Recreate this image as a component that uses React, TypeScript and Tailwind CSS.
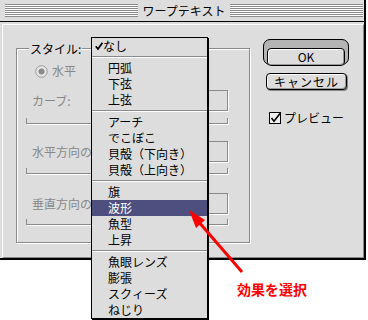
import React from 'react';

type MenuRow = { label?: string; sep?: boolean; checked?: boolean; active?: boolean };

const menuRows: MenuRow[] = [
  { label: 'なし', checked: true },
  { sep: true },
  { label: '円弧' },
  { label: '下弦' },
  { label: '上弦' },
  { sep: true },
  { label: 'アーチ' },
  { label: 'でこぼこ' },
  { label: '貝殻（下向き）' },
  { label: '貝殻（上向き）' },
  { sep: true },
  { label: '旗' },
  { label: '波形', active: true },
  { label: '魚型' },
  { label: '上昇' },
  { sep: true },
  { label: '魚眼レンズ' },
  { label: '膨張' },
  { label: 'スクィーズ' },
  { label: 'ねじり' },
];

function Stripes() {
  return (
    <div className="flex-1 h-[13px] bg-[repeating-linear-gradient(to_bottom,#8a8a8a_0px,#8a8a8a_1px,#ffffff_1px,#ffffff_2px)]" />
  );
}

function FieldRow({ label }: { label: string }) {
  return (
    <div className="flex items-center h-[21px] pl-[15px]">
      <span className="text-[12px] leading-[16px] text-[#888888] whitespace-nowrap">{label}</span>
      <div className="ml-auto mr-[21px] w-[51px] h-[21px] border border-[#8a8a8a] shadow-[1px_1px_0_#ffffff]" />
    </div>
  );
}

function Bracket({ mt }: { mt: string }) {
  return (
    <div className={`${mt} ml-[9px] w-[202px] h-[6px] border-l border-r border-b border-[#8a8a8a] shadow-[1px_1px_0_#ffffff]`} />
  );
}

export default function App() {
  return (
    <div className="relative w-[368px] h-[320px] bg-white overflow-hidden font-['Noto_Sans_CJK_JP',sans-serif] text-black">
      {/* Dialog window */}
      <div className="w-[366px] h-[260px] flex flex-col bg-[#dddddd] border-r-2 border-b-2 border-black">
        {/* Title bar */}
        <div className="h-[22px] flex items-center pl-[5px] pr-[1px] border-b border-black">
          <Stripes />
          <span className="px-[5px] text-[12px] leading-[14px]">ワープテキスト</span>
          <Stripes />
        </div>

        {/* Body */}
        <div className="flex-1 flex pl-[2px] pt-[2px]">
          <div className="flex-1 flex items-start border-l border-t border-white border-r border-b border-r-[#8a8a8a] border-b-[#8a8a8a]">
            {/* Style group */}
            <div className="relative ml-[13px] mt-[23px] w-[234px] h-[195px] border border-[#8a8a8a] shadow-[inset_1px_1px_0_#ffffff,1px_1px_0_#ffffff] flex flex-col">
              <span className="absolute top-[-8px] left-[12px] px-[1px] bg-[#dddddd] text-[12px] leading-[16px]">スタイル:</span>

              <div className="mt-[14px] ml-[18px] h-[16px] flex items-center">
                <svg width="13" height="13" viewBox="0 0 13 13">
                  <circle cx="6.5" cy="6.5" r="5.8" fill="#e6e6e6" stroke="#9a9a9a" strokeWidth="1" />
                  <circle cx="6.5" cy="6.5" r="3" fill="#8a8a8a" />
                </svg>
                <span className="ml-[4px] text-[12px] leading-[16px] text-[#888888]">水平</span>
              </div>

              <div className="mt-[11px]">
                <FieldRow label="カーブ:" />
              </div>
              <Bracket mt="mt-[7px]" />

              <div className="mt-[17px]">
                <FieldRow label="水平方向の" />
              </div>
              <Bracket mt="mt-[6px]" />

              <div className="mt-[19px]">
                <FieldRow label="垂直方向の" />
              </div>
              <Bracket mt="mt-[5px]" />
            </div>

            {/* Buttons */}
            <div className="ml-[13px] mt-[14px] w-[86px] flex flex-col">
              <div className="h-[26px] rounded-[7px] border border-black bg-[#b4b4b4] p-[3px]">
                <button className="w-full h-full rounded-[4px] border border-black bg-[#dddddd] shadow-[inset_1px_1px_0_#ffffff,inset_-1px_-1px_0_#999999] text-[12px] leading-[16px]">
                  OK
                </button>
              </div>
              <button className="mt-[8px] mx-[3px] w-[81px] h-[17px] rounded-[4px] border border-black bg-[#dddddd] shadow-[inset_1px_1px_0_#ffffff,inset_-1px_-1px_0_#999999,1px_1px_0_#888888] text-[12px] leading-[15px] tracking-[1px]">
                キャンセル
              </button>
              <div className="mt-[20px] ml-[6px] flex items-center">
                <svg width="13" height="13" viewBox="0 0 13 13">
                  <rect x="0.5" y="0.5" width="11" height="11" fill="#eeeeee" stroke="#000000" />
                  <path d="M2.5 6 L5 9.2 L11 1.5" fill="none" stroke="#000000" strokeWidth="1.6" />
                </svg>
                <span className="ml-[2px] text-[12px] leading-[16px]">プレビュー</span>
              </div>
            </div>
          </div>
        </div>
      </div>

      {/* Pop-up menu */}
      <div className="absolute left-[91px] top-[37px] w-[117px] h-[282px] bg-[#dddddd] border border-black shadow-[1px_1px_0_#000000] flex flex-col">
        {menuRows.map((row, i) =>
          row.sep ? (
            <div key={i} className="h-[6px] flex flex-col justify-center">
              <div className="h-[2px] border-t border-[#8a8a8a] border-b border-b-white" />
            </div>
          ) : (
            <div
              key={i}
              className={`relative h-[16px] text-[12px] leading-[16px] whitespace-nowrap ${row.checked ? 'pl-[11px]' : 'pl-[16px]'} ${row.active ? 'bg-[#4f4f7f] text-white' : ''}`}
            >
              {row.checked && (
                <svg className="absolute left-[3px] top-[4px]" width="8" height="8" viewBox="0 0 8 8">
                  <path d="M0.8 4.2 L3 7 L7.4 0.8" fill="none" stroke="#000000" strokeWidth="1.7" />
                </svg>
              )}
              {row.label}
            </div>
          )
        )}
      </div>

      {/* Annotation arrow */}
      <svg className="absolute left-0 top-0 pointer-events-none" width="368" height="320" viewBox="0 0 368 320">
        <line x1="242" y1="272" x2="198" y2="221" stroke="#ff0000" strokeWidth="3" />
        <polygon points="189,210 196,228 205,220" fill="#ff0000" />
      </svg>
      <span className="absolute left-[237px] top-[280px] text-[14px] leading-[18px] font-bold text-[#ff0000] whitespace-nowrap">
        効果を選択
      </span>
    </div>
  );
}
